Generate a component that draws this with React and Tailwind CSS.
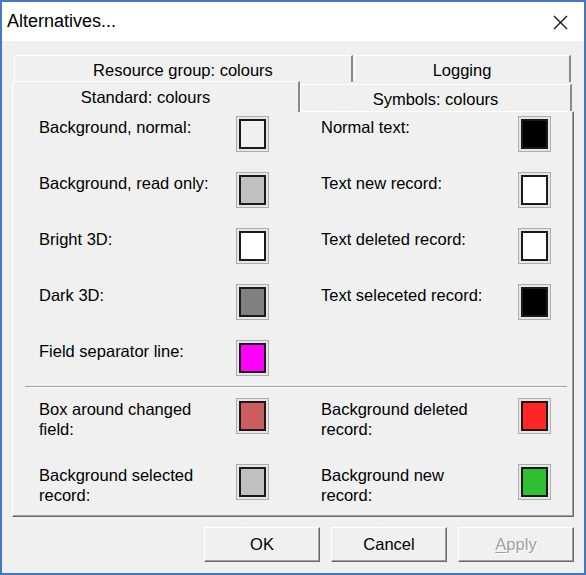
import React from "react";

const topFields = [
  [
    { label: "Background, normal:", color: "#f0f0f0" },
    { label: "Normal text:", color: "#000000" },
  ],
  [
    { label: "Background, read only:", color: "#c0c0c0" },
    { label: "Text new record:", color: "#ffffff" },
  ],
  [
    { label: "Bright 3D:", color: "#ffffff" },
    { label: "Text deleted record:", color: "#ffffff" },
  ],
  [
    { label: "Dark 3D:", color: "#808080" },
    { label: "Text seleceted record:", color: "#000000" },
  ],
  [{ label: "Field separator line:", color: "#ff00ff" }],
];

const bottomFields = [
  [
    { label: "Box around changed field:", color: "#cd5c5c" },
    { label: "Background deleted record:", color: "#ff2626" },
  ],
  [
    { label: "Background selected record:", color: "#c0c0c0" },
    { label: "Background new record:", color: "#30bf30" },
  ],
];

const Swatch = ({ color }) => (
  <div className="w-[33px] h-[36px] shrink-0 border border-[#adadad] bg-[#e6e6e6] p-[2px]">
    <div
      className="w-full h-full border-2 border-[#1a1a1a]"
      style={{ backgroundColor: color }}
    />
  </div>
);

const Field = ({ label, color }) => (
  <div className="flex w-[230px] items-start">
    <div className="w-[197px]">
      <div className="w-[175px] leading-[20px] mt-[1px]">{label}</div>
    </div>
    <Swatch color={color} />
  </div>
);

const FieldRows = ({ rows, gap }) => (
  <div className={`flex flex-col ${gap}`}>
    {rows.map((row, i) => (
      <div key={i} className="flex gap-[52px]">
        {row.map((f) => (
          <Field key={f.label} label={f.label} color={f.color} />
        ))}
      </div>
    ))}
  </div>
);

const Button = ({ children, disabled }) => (
  <button
    className={`w-[116px] h-[35px] bg-[#f0f0f0] border border-t-white border-l-white border-r-[#696969] border-b-[#696969] shadow-[inset_-1px_-1px_0_#a0a0a0] text-[16.5px] ${
      disabled ? "text-[#a0a0a0] [text-shadow:1px_1px_0_#ffffff]" : "text-black"
    }`}
  >
    {children}
  </button>
);

export default function App() {
  return (
    <div className="w-[586px] h-[575px] border-2 border-[#4677c4] bg-[#f0f0f0] flex flex-col text-black text-[16.5px] font-['Liberation_Sans',Arial,sans-serif]">
      {/* title bar */}
      <div className="h-[39px] shrink-0 bg-white flex items-center justify-between pl-[5px] pr-[16px]">
        <span className="text-[18px]">Alternatives...</span>
        <svg width="15" height="15" viewBox="0 0 15 15" className="mt-[1px]">
          <path d="M1 1 L14 14 M14 1 L1 14" stroke="#111" strokeWidth="1.3" />
        </svg>
      </div>

      <div className="flex-1 flex flex-col px-[10px] pt-[14px]">
        {/* back row of tabs */}
        <div className="flex h-[26px] pl-[2px]">
          <div className="w-[339px] h-[27px] flex items-center justify-center border-t border-l border-white border-r-2 border-r-[#8a8a8a] rounded-tl-[2px] pt-[2px]">
            Resource group: colours
          </div>
          <div className="w-[217px] h-[27px] ml-[1px] flex items-center justify-center border-t border-l border-white border-r-2 border-r-[#8a8a8a] rounded-tl-[2px] pt-[2px]">
            Logging
          </div>
        </div>

        {/* front row of tabs */}
        <div className="flex items-end h-[30px] relative z-10">
          <div className="w-[288px] h-[31px] -mb-[1px] bg-[#f0f0f0] flex items-center justify-center pr-[20px] border-t border-l border-white border-r-2 border-r-[#8a8a8a] rounded-tl-[2px]">
            Standard: colours
          </div>
          <div className="w-[272px] h-[27px] flex items-center justify-center pt-[2px] border-t border-l border-white border-r-2 border-r-[#8a8a8a] rounded-tl-[2px]">
            Symbols: colours
          </div>
        </div>

        {/* panel */}
        <div className="w-[562px] h-[406px] border border-t-white border-l-white border-r-[#696969] border-b-[#696969] shadow-[inset_-1px_-1px_0_#a0a0a0] pl-[26px] pt-[4px]">
          <FieldRows rows={topFields} gap="gap-[20px]" />
          <div className="w-[542px] -ml-[14px] mt-[10px] mb-[10px] border-t border-t-[#a0a0a0] border-b border-b-white" />
          <FieldRows rows={bottomFields} gap="gap-[25px]" />
        </div>

        {/* buttons */}
        <div className="flex justify-end gap-[11px] mt-[10px]">
          <Button>OK</Button>
          <Button>Cancel</Button>
          <Button disabled>
            <span className="underline underline-offset-2">A</span>pply
          </Button>
        </div>
      </div>
    </div>
  );
}
